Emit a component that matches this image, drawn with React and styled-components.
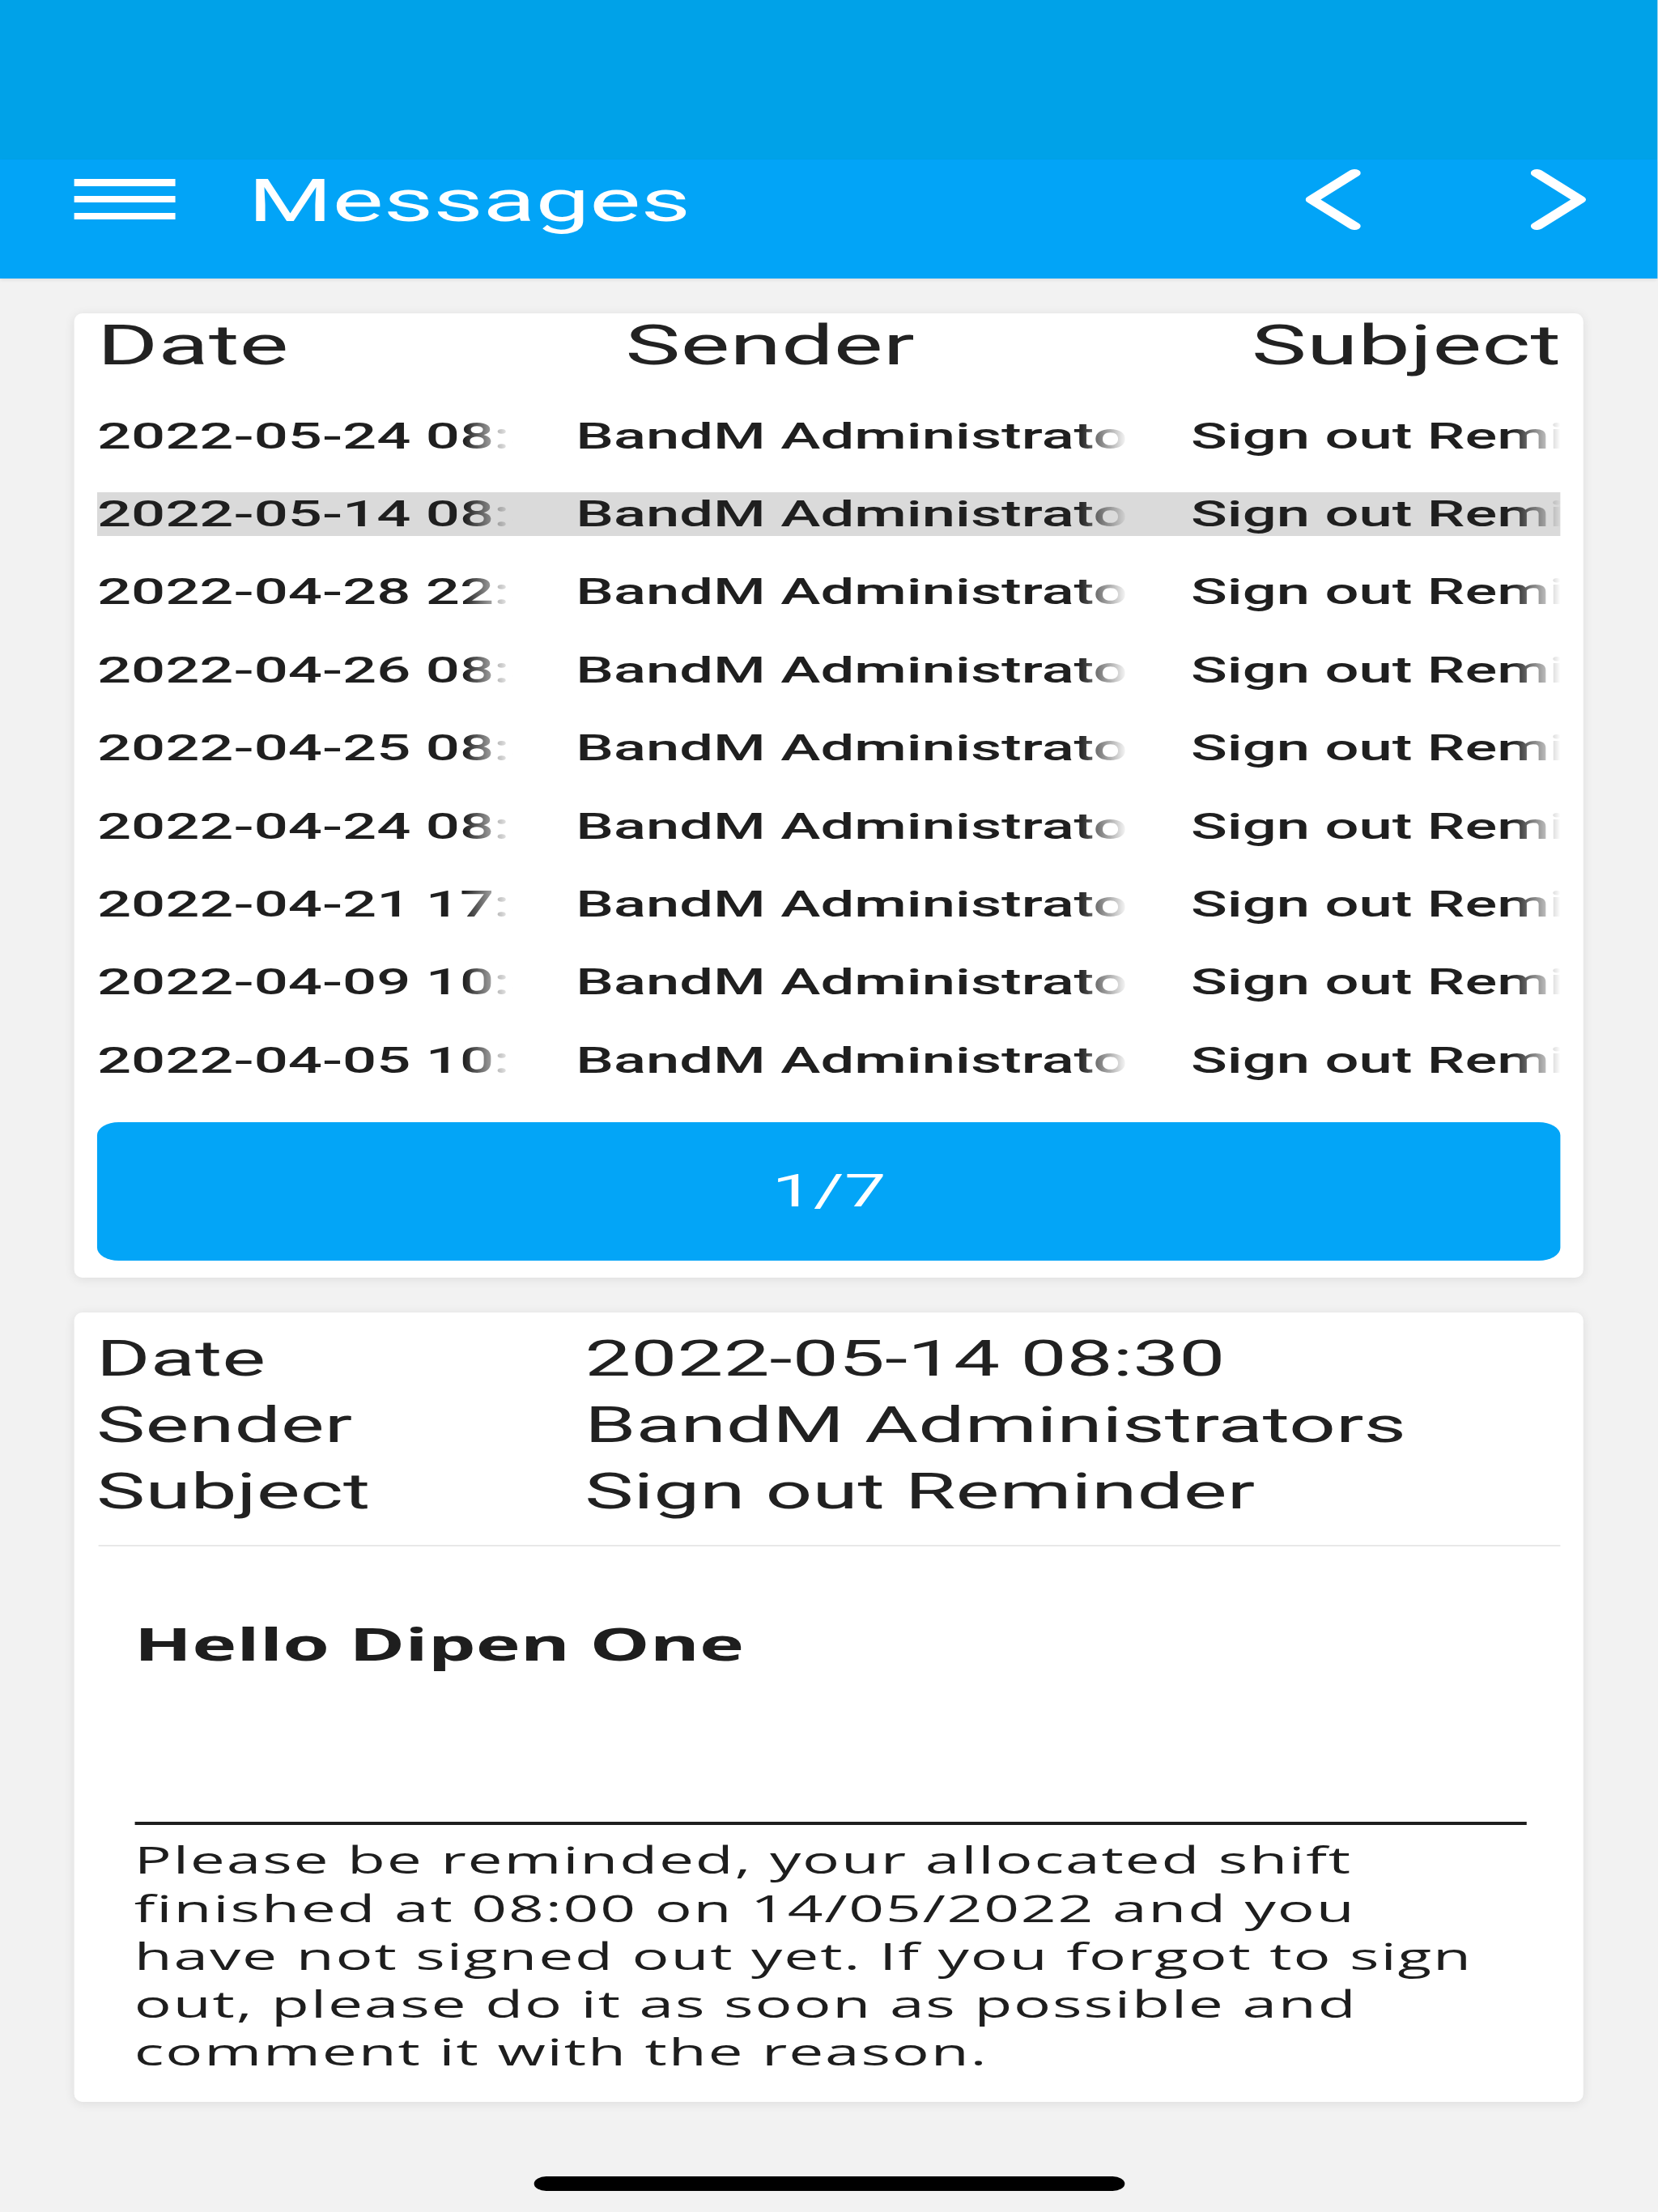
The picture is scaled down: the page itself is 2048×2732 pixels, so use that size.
import React from "react";
import styled, { createGlobalStyle } from "styled-components";

// The reference is a 1080x2400 phone screen resized to 2048x2732,
// so everything is drawn on a narrower screen and stretched horizontally.
const SX = 2048 / 1080 / (2732 / 2400);
const INNER_W = 2048 / SX;

const GlobalStyle = createGlobalStyle`
  html, body {
    margin: 0;
    padding: 0;
    background: #f2f2f2;
  }
  body {
    font-family: Roboto, "Noto Sans", "Liberation Sans", sans-serif;
    color: #212121;
  }
  *, *::before, *::after { box-sizing: border-box; }
`;

const Viewport = styled.div`
  width: 2048px;
  height: 2732px;
  overflow: hidden;
  background: #f2f2f2;
`;

const Screen = styled.div`
  width: ${INNER_W}px;
  height: 2732px;
  transform: scaleX(${SX});
  transform-origin: 0 0;
  display: flex;
  flex-direction: column;
`;

const StatusBar = styled.div`
  height: 197px;
  flex-shrink: 0;
  background: #00a2e8;
`;

const Toolbar = styled.header`
  height: 147px;
  flex-shrink: 0;
  padding: 0 53px 49px 55px;
  background: #02a4f7;
  display: flex;
  align-items: center;
  box-shadow: 0 2px 3px rgba(0, 0, 0, 0.08);
  position: relative;
  z-index: 1;
`;

const MenuButton = styled.button`
  width: 75px;
  height: 50px;
  padding: 0;
  border: 0;
  background: none;
  display: flex;
  flex-direction: column;
  justify-content: space-between;
  flex-shrink: 0;
`;

const MenuBar = styled.span`
  display: block;
  height: 8.5px;
  background: #ffffff;
`;

const Title = styled.h1`
  flex: 1;
  margin: 4px 0 0 54px;
  font-size: 71.5px;
  line-height: 83px;
  font-weight: 400;
  color: #ffffff;
`;

const NavGroup = styled.div`
  display: flex;
  align-items: center;
  gap: 126px;
`;

const NavButton = styled.button`
  width: 41px;
  height: 75px;
  padding: 0;
  border: 0;
  background: none;
  display: block;
  svg { display: block; }
`;

const Content = styled.main`
  padding: 43px 55px 0;
  display: flex;
  flex-direction: column;
  gap: 43px;
`;

const Card = styled.section`
  background: #ffffff;
  border-radius: 6px / 10px;
  box-shadow: 0 2px 10px rgba(0, 0, 0, 0.09);
`;

const ListCard = styled(Card)`
  padding: 1.5px 17px 21px 17px;
`;

const HeaderRow = styled.div`
  display: flex;
  justify-content: space-between;
  font-size: 69px;
  line-height: 76.5px;
  font-weight: 400;
  color: #222222;
`;

const List = styled.div`
  margin-top: 46.6px;
  display: flex;
  flex-direction: column;
  gap: 42.4px;
`;

const Row = styled.div`
  display: grid;
  grid-template-columns: 308px 409px 1fr;
  column-gap: 47px;
  height: 54px;
  font-size: 44.5px;
  line-height: 54px;
  font-weight: 500;
  color: #1f1f1f;
  background: ${(p) => (p.$selected ? "#dadada" : "transparent")};
`;

const Cell = styled.div`
  overflow: hidden;
  white-space: nowrap;
  -webkit-mask-image: linear-gradient(to right, #000 calc(100% - 36px), transparent 100%);
  mask-image: linear-gradient(to right, #000 calc(100% - 36px), transparent 100%);
`;

const PagerButton = styled.button`
  display: block;
  width: 100%;
  height: 171px;
  margin-top: 49.2px;
  border: 0;
  border-radius: 16px;
  background: #03a5f7;
  color: #ffffff;
  font-family: inherit;
  font-size: 55px;
  font-weight: 400;
`;

const DetailCard = styled(Card)`
  padding: 16px 17px 32.25px 16.5px;
`;

const InfoGrid = styled.dl`
  margin: 0;
  display: grid;
  grid-template-columns: 362px 1fr;
  font-size: 61px;
  line-height: 82px;
  color: #212121;
  dt, dd { margin: 0; }
`;

const Divider = styled.hr`
  margin: 25px 0 0 1.5px;
  border: 0;
  height: 2px;
  background: #e8e8e8;
`;

const MessageBody = styled.article`
  margin: 0 25px 0 28px;
  color: #1e1e1e;
  font-family: "Open Sans", "Noto Sans", "Liberation Sans", sans-serif;
`;

const Greeting = styled.h2`
  margin: 87.5px 0 0;
  font-size: 56px;
  line-height: 65.6px;
  font-weight: 700;
`;

const Rule = styled.hr`
  margin: 186.9px 0 0;
  border: 0;
  height: 4px;
  background: #1e1e1e;
`;

const MessageText = styled.p`
  margin: 13.5px 0 0;
  padding-right: 20px;
  font-size: 46px;
  line-height: 59.25px;
  letter-spacing: 1.1px;
  font-weight: 400;
`;

const HomeIndicator = styled.div`
  margin: auto auto 26px;
  width: 438px;
  height: 18px;
  border-radius: 9px;
  background: #000000;
  flex-shrink: 0;
`;

const Chevron = ({ dir }) => (
  <svg width="41" height="75" viewBox="0 0 41 75" fill="none">
    <polyline
      points={dir === "left" ? "36.25,4.75 4.75,37.5 36.25,70.25" : "4.75,4.75 36.25,37.5 4.75,70.25"}
      stroke="#ffffff"
      strokeWidth="9.5"
      strokeLinecap="round"
      strokeLinejoin="round"
    />
  </svg>
);

const messages = [
  "2022-05-24 08:30",
  "2022-05-14 08:30",
  "2022-04-28 22:30",
  "2022-04-26 08:30",
  "2022-04-25 08:30",
  "2022-04-24 08:30",
  "2022-04-21 17:30",
  "2022-04-09 10:30",
  "2022-04-05 10:30",
].map((date) => ({ date, sender: "BandM Administrators", subject: "Sign out Reminder" }));

export default function App() {
  return (
    <>
      <GlobalStyle />
      <Viewport>
        <Screen>
          <StatusBar />
          <Toolbar>
            <MenuButton aria-label="Menu">
              <MenuBar />
              <MenuBar />
              <MenuBar />
            </MenuButton>
            <Title>Messages</Title>
            <NavGroup>
              <NavButton aria-label="Previous">
                <Chevron dir="left" />
              </NavButton>
              <NavButton aria-label="Next">
                <Chevron dir="right" />
              </NavButton>
            </NavGroup>
          </Toolbar>
          <Content>
            <ListCard>
              <HeaderRow>
                <span>Date</span>
                <span>Sender</span>
                <span>Subject</span>
              </HeaderRow>
              <List>
                {messages.map((m, i) => (
                  <Row key={i} $selected={i === 1}>
                    <Cell>{m.date}</Cell>
                    <Cell>{m.sender}</Cell>
                    <Cell>{m.subject}</Cell>
                  </Row>
                ))}
              </List>
              <PagerButton>1/7</PagerButton>
            </ListCard>
            <DetailCard>
              <InfoGrid>
                <dt>Date</dt>
                <dd>2022-05-14 08:30</dd>
                <dt>Sender</dt>
                <dd>BandM Administrators</dd>
                <dt>Subject</dt>
                <dd>Sign out Reminder</dd>
              </InfoGrid>
              <Divider />
              <MessageBody>
                <Greeting>Hello Dipen One</Greeting>
                <Rule />
                <MessageText>
                  Please be reminded, your allocated shift finished at 08:00 on 14/05/2022 and you have not
                  signed out yet. If you forgot to sign out, please do it as soon as possible and comment it
                  with the reason.
                </MessageText>
              </MessageBody>
            </DetailCard>
          </Content>
          <HomeIndicator />
        </Screen>
      </Viewport>
    </>
  );
}
